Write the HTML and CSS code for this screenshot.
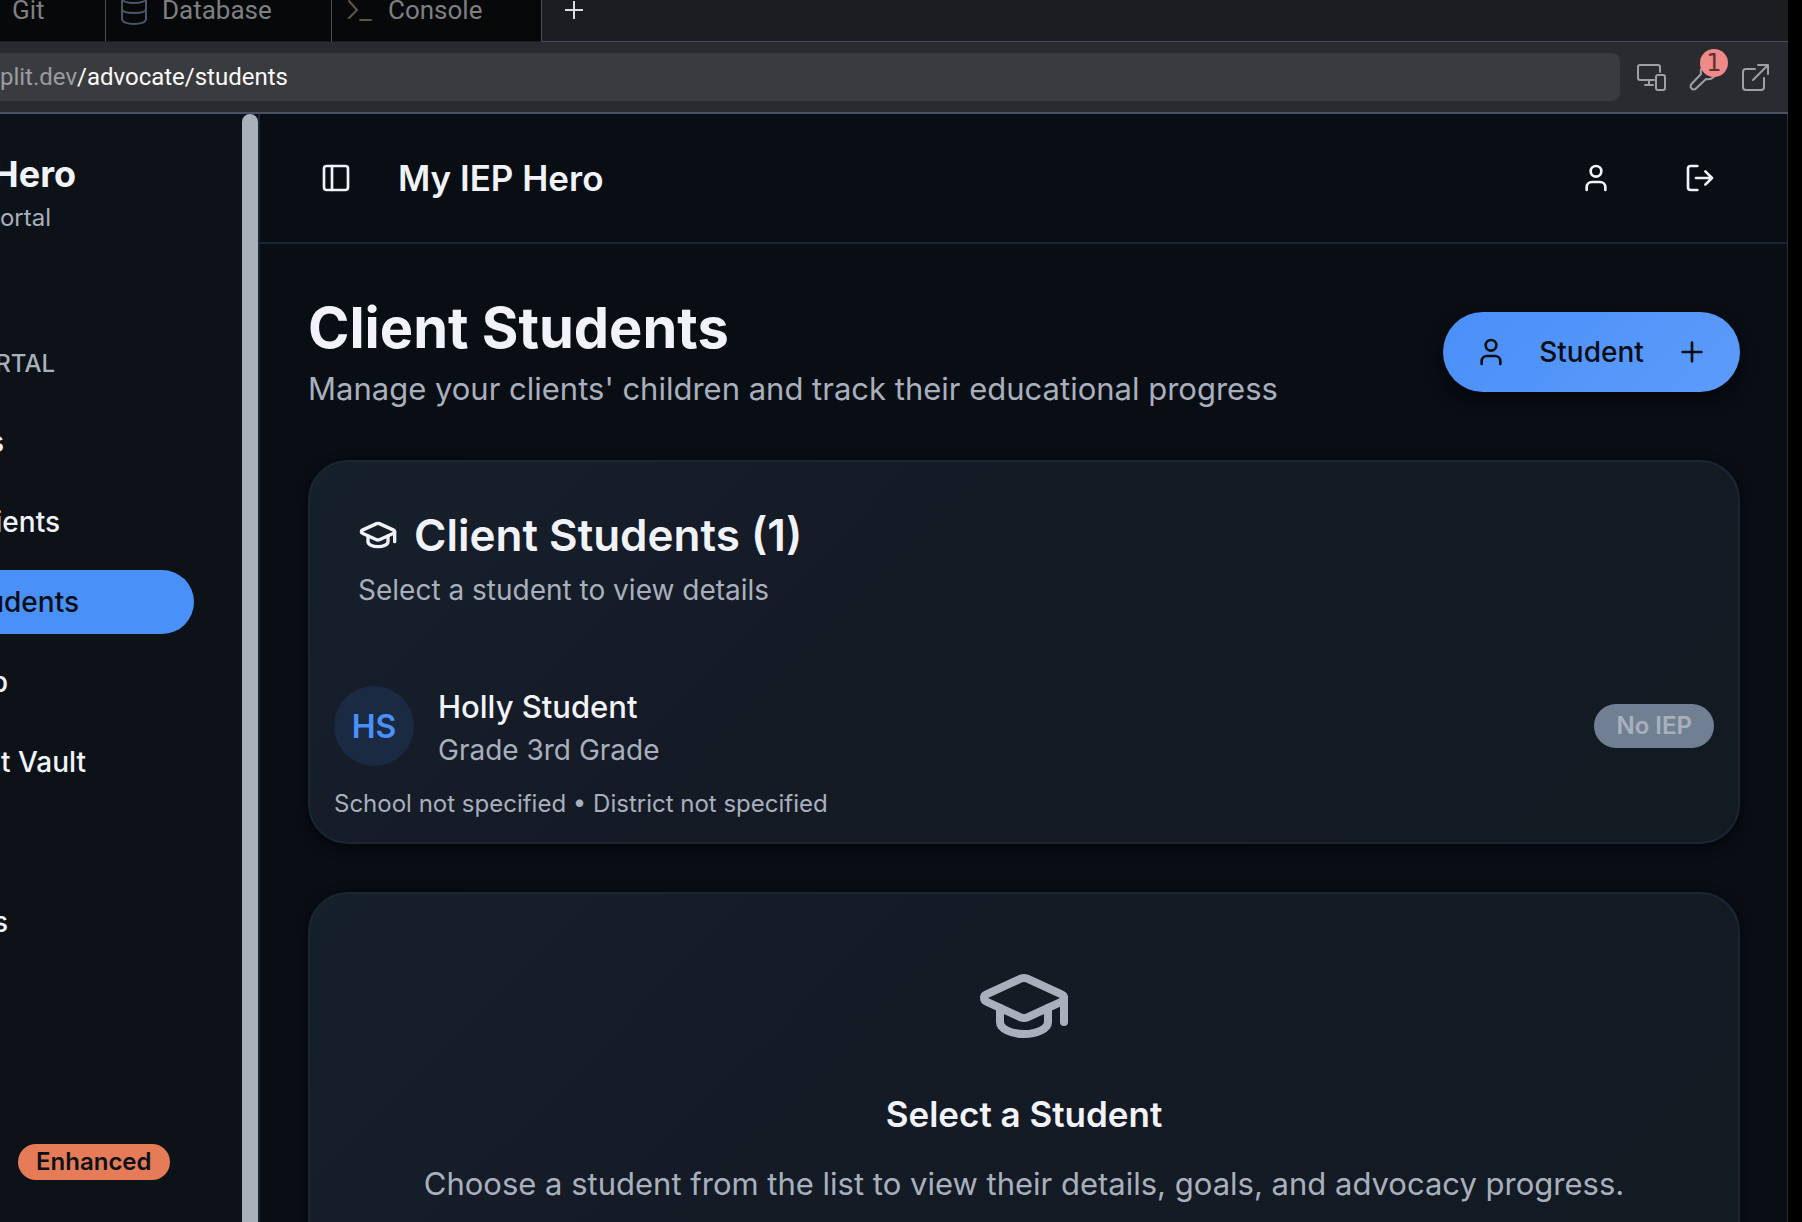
FILE: index.html
```html
<!DOCTYPE html>
<html lang="en">
<head>
<meta charset="utf-8">
<meta name="viewport" content="width=device-width, initial-scale=1">
<title>My IEP Hero</title>
<link rel="stylesheet" href="styles.css">
</head>
<body>
<svg class="sprite" aria-hidden="true">
  <symbol id="user" viewBox="0 0 24 24"><path d="M19 21v-2a4 4 0 0 0-4-4H9a4 4 0 0 0-4 4v2"/><circle cx="12" cy="7" r="4"/></symbol>
  <symbol id="cap" viewBox="0 0 24 24"><path d="M21.42 10.922a1 1 0 0 0-.019-1.838L12.83 5.18a2 2 0 0 0-1.66 0L2.6 9.08a1 1 0 0 0 0 1.832l8.57 3.908a2 2 0 0 0 1.66 0z"/><path d="M22 10v6"/><path d="M6 12.5V16a6 3 0 0 0 12 0v-3.5"/></symbol>
  <symbol id="plus" viewBox="0 0 24 24"><path d="M5 12h14M12 5v14"/></symbol>
</svg>
<div class="window">
  <nav class="tabs" aria-label="Tools">
    <button class="tab tab-git">Git</button>
    <button class="tab tab-database">
      <svg class="tab-icon database" viewBox="0 0 28 32"><path d="M2 5v20c0 3 5 5 12 5s12-2 12-5V5"/><ellipse cx="14" cy="5" rx="12" ry="4"/><path d="M2 15c0 3 5 4 12 4s12-1 12-4"/></svg>
      Database</button>
    <button class="tab tab-console">
      <svg class="tab-icon console" viewBox="0 0 28 32"><path d="M3 7l8 9-8 8M14 26h11"/></svg>
      Console</button>
    <button class="tab-add" aria-label="New tab"><svg class="add-icon" viewBox="0 0 20 20"><path d="M1 10h18M10 1v18"/></svg></button>
  </nav>
  <div class="toolbar">
    <div class="address"><span class="host">plit.dev</span><span>/advocate/students</span></div>
    <div class="tools">
      <button class="tool" aria-label="Devices"><svg class="tool-icon" viewBox="0 0 32 32"><path d="M18 19H4a2 2 0 0 1-2-2V6a2 2 0 0 1 2-2h18a2 2 0 0 1 2 2v5M13 19v5M9 24h8"/><rect x="20" y="14" width="9" height="15" rx="2"/></svg></button>
      <button class="tool" aria-label="Developer tools"><svg class="tool-icon" viewBox="0 0 32 32"><path d="M13 13L3.500 23a3 3 0 0 0 4.500 4.500L18 18a8 8 0 0 0 10-9l-5 4-4-1-1-4 4-5a8 8 0 0 0-9 10z"/></svg><span class="count">1</span></button>
      <button class="tool" aria-label="Open in new window"><svg class="tool-icon" viewBox="0 0 32 32"><path d="M15 8H6a3 3 0 0 0-3 3v15a3 3 0 0 0 3 3h15a3 3 0 0 0 3-3v-9M18 4h10v9M28 4L13 19"/></svg></button>
    </div>
  </div>
  <div class="app">
    <aside class="sidebar">
      <div class="brand">
        <span class="clip brand-name">Hero</span>
        <span class="clip brand-sub">ortal</span>
      </div>
      <div class="group"><span class="clip">RTAL</span></div>
      <nav class="menu" aria-label="Portal">
        <a class="item" href="#"><span class="clip clip-first">s</span></a>
        <a class="item" href="#"><span class="clip clip-clients">ients</span></a>
        <a class="item active" href="#"><span class="clip clip-students">udents</span></a>
        <a class="item" href="#"><span class="clip clip-s">p</span></a>
        <a class="item" href="#"><span class="clip clip-vault">nt Vault</span></a>
        <span class="item"></span>
        <a class="item" href="#"><span class="clip clip-s">s</span></a>
      </nav>
      <span class="enhanced">Enhanced</span>
    </aside>
    <div class="scrollbar"><div class="thumb"></div></div>
    <div class="main">
      <header class="header">
        <button class="icon-button" aria-label="Toggle sidebar"><svg class="icon" viewBox="0 0 24 24"><rect x="3" y="3" width="18" height="18" rx="2"/><path d="M9 3v18"/></svg></button>
        <span class="app-name">My IEP Hero</span>
        <button class="icon-button" aria-label="Profile"><svg class="icon"><use href="#user"/></svg></button>
        <button class="icon-button" aria-label="Log out"><svg class="icon" viewBox="0 0 24 24"><path d="M10 3H5a2 2 0 0 0-2 2v14a2 2 0 0 0 2 2h5M16 17l5-5-5-5M21 12H9"/></svg></button>
      </header>
      <main class="content">
        <div class="page-head">
          <div>
            <h1>Client Students</h1>
            <p class="lead">Manage your clients' children and track their educational progress</p>
          </div>
          <button class="add-student"><svg class="icon"><use href="#user"/></svg><span>Student</span><svg class="icon"><use href="#plus"/></svg></button>
        </div>
        <section class="card">
          <div class="card-head">
            <h2><svg class="icon icon-title"><use href="#cap"/></svg>Client Students (1)</h2>
            <p class="text">Select a student to view details</p>
          </div>
          <div class="student">
            <span class="avatar">HS</span>
            <div class="who">
              <span class="name">Holly Student</span>
              <span class="text">Grade 3rd Grade</span>
            </div>
            <span class="no-iep">No IEP</span>
          </div>
          <p class="school">School not specified • District not specified</p>
        </section>
        <section class="card empty">
          <svg class="icon icon-large"><use href="#cap"/></svg>
          <h3>Select a Student</h3>
          <p class="lead">Choose a student from the list to view their details, goals, and advocacy progress.</p>
        </section>
      </main>
    </div>
  </div>
</div>
</body>
</html>
```
FILE: styles.css
```css
* { box-sizing: border-box; }
body { margin: 0; height: 100vh; overflow: hidden; background: #000; color: #f1f3f8; font-family: Inter, "Liberation Sans", sans-serif; }
h1, h2, h3, p { margin: 0; }
button { margin: 0; padding: 0; border: 0; background: none; color: inherit; font: inherit; }
a { color: inherit; text-decoration: none; }
svg { fill: none; stroke: currentColor; stroke-linecap: round; stroke-linejoin: round; flex: none; }
.sprite { display: none; }
.window { display: flex; flex-direction: column; height: 100vh; margin-right: 14px; }

.tabs { display: flex; height: 42px; flex: none; background: #1c1d21; font-family: Roboto, sans-serif; font-size: 26px; line-height: 32px; overflow: hidden; }
.tab { display: flex; align-items: flex-start; gap: 14px; height: 48px; margin-top: -6px; padding: 0 14px; background: #070809; border-right: 1px solid #4a4d5e; border-bottom: 1px solid #1c1d21; color: #7e7f82; }
.tab-git { width: 106px; padding: 0 12px; }
.tab-database { width: 226px; }
.tab-console { width: 210px; }
.tab-icon { width: 28px; height: 32px; stroke-width: 2; }
.database { color: #4a5568; }
.console { color: #5e5843; }
.tab-add { display: flex; flex: 1; align-items: flex-start; padding: 0 22px; border-bottom: 1px solid #4a4d5e; color: #dcdde0; }
.add-icon { width: 20px; height: 20px; stroke-width: 2; stroke-linecap: butt; }

.toolbar { display: flex; align-items: center; flex: none; gap: 16px; height: 72px; padding-right: 16px; background: #2a2b30; border-bottom: 2px solid #4d5165; color: #9fa0a4; }
.address { display: flex; flex: 1; height: 48px; align-items: center; border-radius: 0 8px 8px 0; background: #3a3b3f; color: #fafafa; font: 24px/32px Roboto, sans-serif; }
.host { display: flex; justify-content: flex-end; width: 77px; color: #9b9ca0; }
.tools { display: flex; gap: 20px; }
.tool { position: relative; display: flex; width: 32px; height: 32px; }
.tool-icon { width: 32px; height: 32px; stroke-width: 2; }
.count { position: absolute; left: 12px; top: -12px; width: 28px; height: 28px; border-radius: 14px; background: #f08a88; color: #5c3235; font: 24px/28px "DejaVu Sans", sans-serif; text-align: center; }

.app { display: flex; flex: 1; min-height: 0; border-right: 1px solid #2b2e34; }
.sidebar { display: flex; flex-direction: column; width: 242px; flex: none; background: #0d1218; }
.brand { padding-top: 38px; height: 214px; }
.clip { display: flex; justify-content: flex-end; white-space: nowrap; }
.brand-name { width: 76px; font-size: 36px; line-height: 44px; font-weight: 700; }
.brand-sub { width: 51px; font-size: 24px; line-height: 44px; color: #a9b0bd; }
.group { width: 55px; height: 72px; font-size: 24px; line-height: 72px; font-weight: 500; color: #a9b0bd; }
.menu { display: flex; flex-direction: column; gap: 16px; padding: 10px 48px 0 0; }
.item { display: flex; align-items: center; height: 64px; font-size: 28px; line-height: 40px; font-weight: 500; }
.active { border-radius: 0 32px 32px 0; background: #4a90f9; color: #090d14; }
.clip-first { width: 4px; }
.clip-s { width: 8px; }
.clip-clients { width: 60px; }
.clip-students { width: 79px; }
.clip-vault { width: 86px; }
.enhanced { align-self: flex-start; margin: auto 0 42px 18px; padding: 0 18px; border-radius: 18px; background: #e67b57; color: #0d1218; font-size: 24px; line-height: 36px; font-weight: 600; }
.scrollbar { display: flex; width: 18px; flex: none; border-right: 2px solid #1a2634; background: #0d1218; }
.thumb { flex: 1; border-radius: 8px 8px 0 0; background: #aab0bc; }

.main { flex: 1; min-width: 0; overflow: hidden; background: #090d14; }
.header { display: flex; align-items: center; gap: 20px; height: 130px; padding: 0 45px 0 34px; border-bottom: 2px solid #1a2634; }
.icon-button { display: flex; align-items: center; justify-content: center; width: 84px; height: 80px; }
.icon { width: 32px; height: 32px; stroke-width: 2; }
.app-name { flex: 1; font-size: 35px; line-height: 56px; font-weight: 600; }
.content { display: flex; flex-direction: column; gap: 48px; padding: 48px 47px 48px 48px; }
.page-head { display: flex; align-items: center; justify-content: space-between; height: 120px; }
h1 { font-size: 56px; line-height: 74px; font-weight: 700; }
.lead { font-size: 31px; line-height: 48px; color: #a9b0bd; }
.add-student { display: flex; align-items: center; justify-content: space-between; width: 297px; height: 80px; padding: 0 32px; border-radius: 40px; background: linear-gradient(135deg, #4a90f9, #5c9bfa); box-shadow: 0 8px 16px #0008; color: #090d14; font-size: 28px; font-weight: 500; }
.card { border: 2px solid #1a2634; border-radius: 40px; background: linear-gradient(135deg, #16202b, #151b26 35%, #121a22); box-shadow: 0 4px 12px #0008; padding: 0 24px 20px; }
.card-head { padding: 48px 24px 72px; }
h2 { display: flex; align-items: center; gap: 16px; font-size: 44px; line-height: 50px; font-weight: 600; }
.icon-title { width: 40px; height: 40px; }
.text { font-size: 28px; line-height: 40px; color: #a9b0bd; }
.card-head .text { margin-top: 10px; }
.student { display: flex; align-items: center; gap: 24px; height: 88px; }
.avatar { width: 80px; height: 80px; border-radius: 50%; background: #1a2a43; color: #4a90f9; font-size: 32px; line-height: 82px; font-weight: 600; text-align: center; }
.who { display: flex; flex: 1; flex-direction: column; padding-top: 2px; }
.name { font-size: 31px; line-height: 46px; font-weight: 500; }
.no-iep { padding: 0 22px; border-radius: 22px; background: #708092; color: #a9b0bd; font-size: 24px; line-height: 44px; font-weight: 600; }
.school { margin-top: 16px; font-size: 24px; line-height: 36px; color: #a9b0bd; }
.empty { display: flex; flex-direction: column; align-items: center; padding: 64px 24px; }
.icon-large { width: 96px; height: 96px; color: #a9b0bd; }
h3 { margin: 32px 0 18px; font-size: 35px; line-height: 56px; font-weight: 600; }
```
